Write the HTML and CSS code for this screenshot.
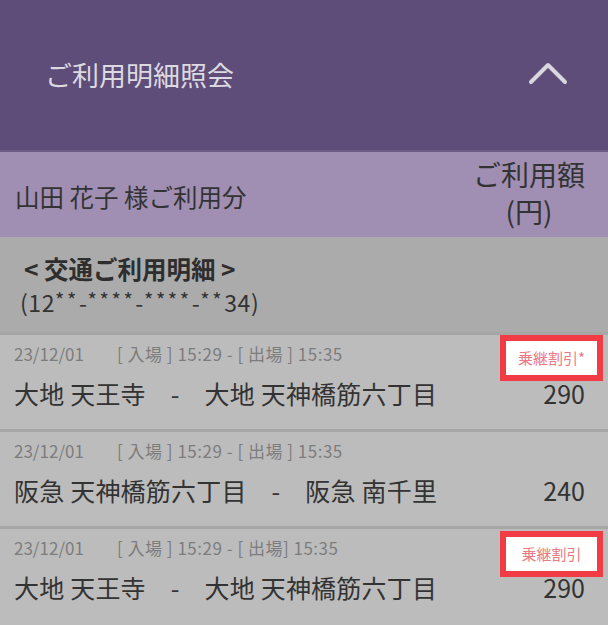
FILE: index.html
```html
<!DOCTYPE html>
<html lang="ja">
<head>
<meta charset="utf-8">
<link rel="stylesheet" href="styles.css">
</head>
<body>
<div class="page">
  <header class="top">
    <h1 class="title">ご利用明細照会</h1>
    <svg class="chev" width="40" height="26" viewBox="0 0 40 26"><polyline points="3,22 20,5 37,22" fill="none" stroke="#d9d6de" stroke-width="4" stroke-linecap="round" stroke-linejoin="round"/></svg>
  </header>
  <div class="owner">
    <div class="owner-name">山田 花子 様ご利用分</div>
    <div class="owner-amt">ご利用額<br>(円)</div>
  </div>
  <div class="section">
    <div class="section-title">&lt; 交通ご利用明細 &gt;</div>
    <div class="section-card">(12<span class="ast">**</span>-<span class="ast">****</span>-<span class="ast">****</span>-<span class="ast">**</span>34)</div>
  </div>
  <div class="row">
    <div class="meta"><span class="date">23/12/01</span><span class="time">[ 入場 ] 15:29 - [ 出場 ] 15:35</span></div>
    <div class="line"><span class="route"><span>大地 天王寺</span><span class="dash">-</span><span>大地 天神橋筋六丁目</span></span><span class="amt">290</span></div>
    <div class="badge">乗継割引*</div>
  </div>
  <div class="row">
    <div class="meta"><span class="date">23/12/01</span><span class="time">[ 入場 ] 15:29 - [ 出場 ] 15:35</span></div>
    <div class="line"><span class="route"><span>阪急 天神橋筋六丁目</span><span class="dash">-</span><span>阪急 南千里</span></span><span class="amt">240</span></div>
  </div>
  <div class="row">
    <div class="meta"><span class="date">23/12/01</span><span class="time">[ 入場 ] 15:29 - [ 出場] 15:35</span></div>
    <div class="line"><span class="route"><span>大地 天王寺</span><span class="dash">-</span><span>大地 天神橋筋六丁目</span></span><span class="amt">290</span></div>
    <div class="badge badge2">乗継割引</div>
  </div>
</div>
</body>
</html>
```

FILE: styles.css
```css
* { box-sizing: border-box; margin: 0; padding: 0; }
html, body { background: #bcbcbc; }
body {
  font-family: "Noto Sans CJK JP", "Noto Sans", sans-serif;
  color: #333;
  width: 608px;
}
.page { width: 608px; }
.top {
  height: 152px;
  background: #5e4c79;
  border-bottom: 2px solid #6c5d84;
  display: flex;
  align-items: center;
  justify-content: space-between;
  padding: 0 40px 0 45px;
}
.title {
  font-size: 27px;
  font-weight: 400;
  color: #dcdae0;
  line-height: 1;
  margin-top: -2px;
}
.chev { margin-top: -4px; }
.owner {
  height: 85px;
  background: #a08fb3;
  display: flex;
  align-items: center;
  justify-content: space-between;
  padding: 0 23px 0 15px;
}
.owner-name {
  font-size: 24.5px;
  line-height: 1;
  color: #333;
  margin-top: 6px;
}
.owner-amt {
  font-size: 28px;
  line-height: 37px;
  text-align: center;
  color: #333;
  margin-top: -4px;
}
.section {
  background: #ababab;
  height: 95px;
  padding: 16px 0 0 20px;
}
.section-title {
  font-size: 24.5px;
  font-weight: 700;
  line-height: 32px;
  color: #2e2e2e;
  padding-left: 4px;
}
.section-card {
  font-size: 23px;
  line-height: 30px;
  color: #333;
  letter-spacing: 0.6px;
}
.ast {
  font-size: 20px;
  vertical-align: 4px;
  letter-spacing: 2.6px;
}
.row {
  position: relative;
  height: 97px;
  background: #bcbcbc;
  border-top: 3px solid #a6a6a6;
  padding: 7px 23px 0 14px;
}
.meta {
  font-size: 17px;
  line-height: 24px;
  color: #7c7c7c;
  display: flex;
}
.date { width: 103px; }
.time { letter-spacing: 0.5px; }
.line {
  margin-top: 10px;
  display: flex;
  justify-content: space-between;
  align-items: center;
  font-size: 25px;
  line-height: 34px;
  color: #333;
}
.route span:first-child, .route span:last-child { letter-spacing: 0.2px; }
.dash { margin: 0 25px; }
.amt { font-size: 25px; }
.badge {
  position: absolute;
  top: 0;
  right: 5px;
  width: 103px;
  height: 46px;
  background: #fff;
  border: 6px solid #f23c44;
  color: #ea7a82;
  font-size: 15px;
  line-height: 34px;
  text-align: center;
}
.badge2 { top: 2px; }
```
